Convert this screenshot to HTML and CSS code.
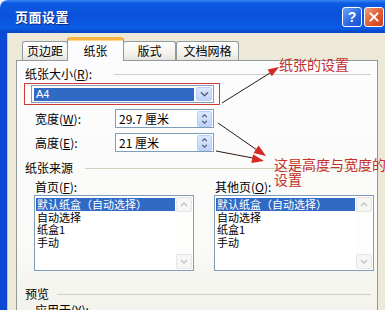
FILE: index.html
```html
<html>
  <head>
    <title>页面设置</title>
    <link rel="stylesheet" href="styles.css">
  </head>
  <body>
    <div class="window">
      <div class="titlebar">
        <span class="title">页面设置</span>
        <span class="tbtn help">?</span>
        <span class="tbtn close">
          <svg viewBox="0 0 20 20" width="20" height="20"><path d="M6 6 L14 14 M14 6 L6 14" stroke="#fff" stroke-width="2.2" stroke-linecap="round"/></svg>
        </span>
      </div>

      <div class="client">
        <div class="tabs">
          <span class="tab tab-margins">页边距</span>
          <span class="tab tab-paper active">纸张</span>
          <span class="tab tab-layout">版式</span>
          <span class="tab tab-grid">文档网格</span>
        </div>

        <div class="panel">
          <div class="group">纸张大小(<u>R</u>):</div>
          <div class="mark">
            <div class="combo">
              <span class="combo-sel">A4</span>
              <span class="drop">
                <svg viewBox="0 0 10 6" width="9" height="6"><path d="M1 1 L5 5 L9 1" fill="none" stroke="#4d6185" stroke-width="1.6"/></svg>
              </span>
            </div>
          </div>

          <div class="field">
            <span class="field-label">宽度(<u>W</u>):</span>
            <div class="spin">
              <span class="spin-text">29.7 厘米</span>
              <span class="spin-btn">
                <svg viewBox="0 0 8 5" width="7" height="4"><path d="M1 4 L4 1 L7 4" fill="none" stroke="#4d6185" stroke-width="1.5"/></svg>
                <svg viewBox="0 0 8 5" width="7" height="4"><path d="M1 1 L4 4 L7 1" fill="none" stroke="#4d6185" stroke-width="1.5"/></svg>
              </span>
            </div>
          </div>
          <div class="field">
            <span class="field-label">高度(<u>E</u>):</span>
            <div class="spin">
              <span class="spin-text">21 厘米</span>
              <span class="spin-btn">
                <svg viewBox="0 0 8 5" width="7" height="4"><path d="M1 4 L4 1 L7 4" fill="none" stroke="#4d6185" stroke-width="1.5"/></svg>
                <svg viewBox="0 0 8 5" width="7" height="4"><path d="M1 1 L4 4 L7 1" fill="none" stroke="#4d6185" stroke-width="1.5"/></svg>
              </span>
            </div>
          </div>

          <div class="group source">纸张来源</div>
          <div class="trays">
            <div class="tray">
              <span class="tray-label">首页(<u>F</u>):</span>
              <div class="list">
                <div class="items">
                  <span class="item selected">默认纸盒（自动选择）</span>
                  <span class="item">自动选择</span>
                  <span class="item">纸盒1</span>
                  <span class="item">手动</span>
                </div>
                <div class="scroll">
                  <span class="sbtn"><svg viewBox="0 0 8 5" width="8" height="5"><path d="M1 4 L4 1 L7 4" fill="none" stroke="#c2c6ce" stroke-width="1.5"/></svg></span>
                  <span class="sbtn"><svg viewBox="0 0 8 5" width="8" height="5"><path d="M1 1 L4 4 L7 1" fill="none" stroke="#c2c6ce" stroke-width="1.5"/></svg></span>
                </div>
              </div>
            </div>
            <div class="tray">
              <span class="tray-label">其他页(<u>O</u>):</span>
              <div class="list">
                <div class="items">
                  <span class="item selected">默认纸盒（自动选择）</span>
                  <span class="item">自动选择</span>
                  <span class="item">纸盒1</span>
                  <span class="item">手动</span>
                </div>
                <div class="scroll">
                  <span class="sbtn"><svg viewBox="0 0 8 5" width="8" height="5"><path d="M1 4 L4 1 L7 4" fill="none" stroke="#c2c6ce" stroke-width="1.5"/></svg></span>
                  <span class="sbtn"><svg viewBox="0 0 8 5" width="8" height="5"><path d="M1 1 L4 4 L7 1" fill="none" stroke="#c2c6ce" stroke-width="1.5"/></svg></span>
                </div>
              </div>
            </div>
          </div>

          <div class="group preview">预览</div>
          <div class="apply">应用于(<u>Y</u>):</div>
        </div>
      </div>

      <!-- hand drawn notes on top of the dialog -->
      <svg class="notes" viewBox="0 0 385 310" width="385" height="310">
        <line x1="222" y1="103" x2="270" y2="73" class="note-line"/>
        <polygon points="279,67 271.8,76.3 267.6,69.5" class="note-head"/>
        <line x1="218" y1="123" x2="257" y2="150" class="note-line"/>
        <polygon points="266,156 253.5,152.9 258.6,145.5" class="note-head"/>
        <line x1="216" y1="151" x2="253" y2="158" class="note-line"/>
        <polygon points="264,161 251.3,163 253.1,154.2" class="note-head"/>
      </svg>
      <div class="note note-paper">纸张的设置</div>
      <div class="note note-size">这是高度与宽度的<br>设置</div>
    </div>
  </body>
</html>
```

FILE: styles.css
```css
* {
  box-sizing: border-box;
}
body {
  margin: 0;
  background: #eef0f6;
  font-family: "Noto Sans CJK SC", "Liberation Sans", sans-serif;
  font-size: 12px;
  color: #000;
}
u {
  text-decoration: underline;
}
.window {
  position: relative;
  width: 385px;
  height: 310px;
  overflow: hidden;
  border-radius: 8px 0 0 0;
  display: flex;
  flex-direction: column;
}
.titlebar {
  height: 33px;
  flex: none;
  display: flex;
  align-items: center;
  padding: 0 1px 0 15px;
  background: linear-gradient(#3a86f4 0, #0d5ae2 10%, #0a52d9 50%, #0b5ce6 85%, #0843c2 100%);
}
.title {
  flex: 1;
  color: #fff;
  font-size: 13px;
  font-weight: bold;
  letter-spacing: 0.5px;
  text-shadow: 1px 1px 0 #0a2a8a;
}
.tbtn {
  width: 20px;
  height: 20px;
  margin-left: 2px;
  border: 1px solid #fff;
  border-radius: 3px;
  display: flex;
  align-items: center;
  justify-content: center;
  color: #fff;
  font-family: "Liberation Sans", sans-serif;
  font-weight: bold;
  font-size: 14px;
}
.help {
  background: linear-gradient(135deg, #6ea2f8, #2a64e2 60%, #1c4fd0);
}
.close {
  background: linear-gradient(135deg, #f0a07c, #e05a32 55%, #c9401e);
}
.close svg {
  display: block;
}

.client {
  flex: 1;
  background: #ece9d8;
  border-left: 7px solid #0b49d6;
  box-shadow: inset 1px 0 0 #c9c6b6;
  padding: 4px 7px 0 9px;
}
.tabs {
  display: flex;
  align-items: flex-end;
  height: 24px;
  padding-left: 6px;
}
.tab {
  height: 19px;
  margin-bottom: 1px;
  text-align: center;
  line-height: 17px;
  border: 1px solid #919b9c;
  border-bottom: none;
  border-radius: 3px 3px 0 0;
  background: linear-gradient(#fefefe, #f4f3ee 60%, #e6e4dc);
}
.tab-margins { width: 46px; }
.tab-paper { width: 57px; }
.tab-layout { width: 53px; }
.tab-grid { width: 63px; }
.tab.active {
  height: 24px;
  margin-bottom: 0;
  line-height: 22px;
  position: relative;
  z-index: 1;
  background: #fcfcfe;
  border-top: 3px solid #f7b545;
  border-radius: 3px 3px 0 0;
  box-shadow: inset 0 1px 0 #ffd786;
}
.tab + .tab.active,
.tab.active + .tab {
  margin-left: -1px;
}

.panel {
  margin-top: -1px;
  height: 260px;
  border: 1px solid #919b9c;
  background: linear-gradient(#fcfcfe, #fafaf7 70%, #f2f1ea);
  padding: 6px 0 0 7px;
}
.group {
  display: flex;
  align-items: center;
  line-height: 14px;
  height: 14px;
  padding-left: 1px;
}
.group::after {
  content: "";
  flex: 1;
  height: 1px;
  margin: 0 6px 0 22px;
  background: #d0d0bf;
}
.mark {
  margin-top: 2px;
  width: 196px;
  height: 22px;
  border: 1px solid #d03a34;
  padding: 1px 5px 0 6px;
}
.combo {
  height: 18px;
  border: 1px solid #7f9db9;
  background: #fff;
  display: flex;
  padding: 2px 1px 1px 2px;
}
.combo-sel {
  flex: 1;
  background: #316ac5;
  color: #fff;
  line-height: 12px;
  padding-left: 2px;
  font-family: "Liberation Sans", sans-serif;
  font-size: 11px;
}
.drop {
  width: 16px;
  margin-top: -1px;
  margin-left: 2px;
  border: 1px solid #b9cdf6;
  border-radius: 2px;
  background: linear-gradient(#dde8fd, #c0d3f8);
  display: flex;
  align-items: center;
  justify-content: center;
}

.field {
  display: flex;
  align-items: center;
  margin-top: 3px;
  padding-left: 11px;
  height: 21px;
}
.field + .field {
  margin-top: 3px;
}
.field-label {
  width: 80px;
}
.spin {
  width: 99px;
  height: 19px;
  border: 1px solid #7f9db9;
  background: #fff;
  display: flex;
  align-items: center;
  padding: 1px;
}
.spin-text {
  flex: 1;
  padding-left: 2px;
  line-height: 15px;
}
.spin-btn {
  width: 15px;
  height: 16px;
  border: 1px solid #b9cdf6;
  border-radius: 2px;
  background: linear-gradient(#dde8fd, #c0d3f8);
  display: flex;
  flex-direction: column;
  align-items: center;
  justify-content: center;
  gap: 2px;
}
.spin-btn svg {
  display: block;
}

.source {
  margin-top: 8px;
}
.source::after {
  margin-left: 12px;
}
.trays {
  display: flex;
  margin-top: 5px;
  padding-left: 10px;
}
.tray {
  flex: none;
  width: 180px;
  display: flex;
  flex-direction: column;
}
.tray + .tray {
  width: 160px;
}
.tray-label {
  line-height: 14px;
  padding-left: 1px;
}
.list {
  margin-top: 1px;
  width: 160px;
  height: 76px;
  border: 1px solid #7f9db9;
  background: #fff;
  display: flex;
  padding: 2px 1px 1px 1px;
}
.items {
  flex: 1;
  display: flex;
  flex-direction: column;
}
.item {
  font-size: 11px;
  line-height: 12.5px;
  height: 12.5px;
  padding-left: 1px;
  white-space: nowrap;
}
.item.selected {
  background: #316ac5;
  color: #fff;
}
.scroll {
  width: 16px;
  margin-left: 1px;
  margin-top: -1px;
  display: flex;
  flex-direction: column;
  justify-content: space-between;
  background: #fdfdfb;
}
.sbtn {
  height: 15px;
  border: 1px solid #e4e6ea;
  border-radius: 2px;
  background: #f6f6f3;
  display: flex;
  align-items: center;
  justify-content: center;
}
.sbtn svg {
  display: block;
}
.preview {
  margin-top: 16px;
}
.preview::after {
  margin-left: 8px;
}
.apply {
  margin-top: 2px;
  padding-left: 11px;
  line-height: 14px;
}

.notes {
  position: absolute;
  left: 0;
  top: 0;
  pointer-events: none;
}
.note-line {
  stroke: #2a1a1a;
  stroke-width: 1;
}
.note-head {
  fill: #d42a24;
}
.note {
  position: absolute;
  color: #c4322c;
  font-size: 14px;
  line-height: 15px;
  white-space: nowrap;
}
.note-paper {
  left: 279px;
  top: 57px;
}
.note-size {
  left: 274px;
  top: 157px;
}
```
